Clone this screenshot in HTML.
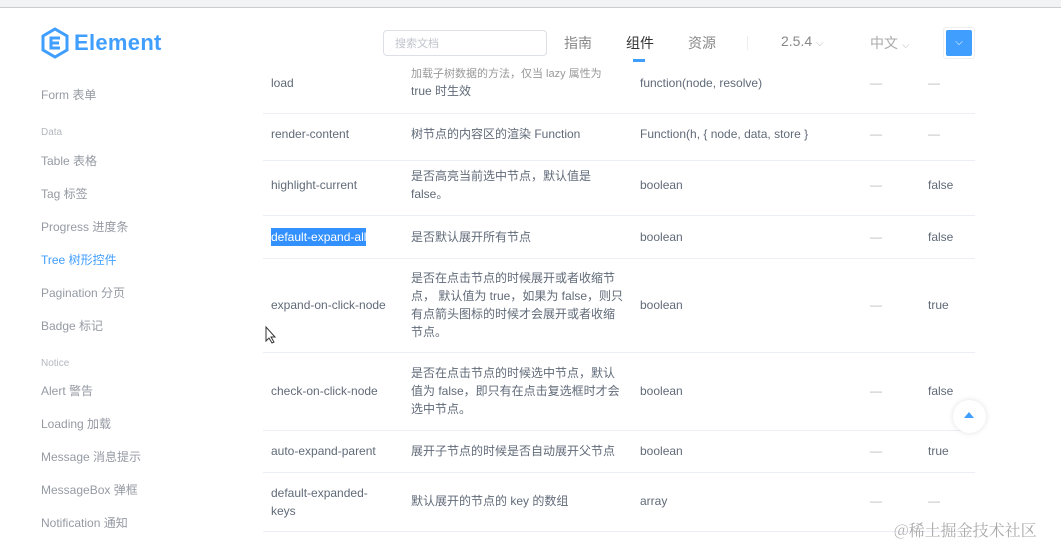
<!DOCTYPE html>
<html><head><meta charset="utf-8"><style>
*{margin:0;padding:0;box-sizing:border-box}
body{width:1061px;height:546px;overflow:hidden;background:#fff;font-family:"Liberation Sans","Noto Sans CJK SC",sans-serif;position:relative;color:#5e6d82}
.a{position:absolute;white-space:nowrap}
.top{position:absolute;left:0;top:0;width:1061px;height:8px;background:#f1f3f4;border-bottom:1px solid #ccc}
.side{font-size:12px;color:#959aa3}
.sm{font-size:10px;color:#b4b8bf}
.line{position:absolute;left:263px;width:712px;height:1px;background:#ebeef5}
.t{font-size:12px;color:#606a78;line-height:18px}
.d{color:#bbb}
.nav{font-size:14px;color:#888}
</style></head><body>
<div class="top"></div>
<svg class="a" style="left:40px;top:27px" width="30" height="32" viewBox="0 0 30 32"><path d="M15 2 L27 9 L27 23 L15 30 L3 23 L3 9 Z" fill="none" stroke="#409eff" stroke-width="3"/><path d="M20 11 L11 11 L11 21 L20 21 M11 16 L19 16" fill="none" stroke="#409eff" stroke-width="3"/></svg>
<div class="a" style="left:74px;top:30px;font-size:22px;font-weight:bold;color:#409eff;letter-spacing:0.3px">Element</div>
<div class="a" style="left:383px;top:30px;width:164px;height:26px;border:1px solid #dcdfe6;border-radius:4px"></div>
<div class="a" style="left:395px;top:35px;font-size:11px;color:#c0c4cc">搜索文档</div>
<div class="a nav" style="left:564px;top:33px">指南</div>
<div class="a nav" style="left:626px;top:33px;color:#333">组件</div>
<div class="a" style="left:633px;top:59px;width:12px;height:3px;background:#409eff"></div>
<div class="a nav" style="left:688px;top:33px">资源</div>
<div class="a" style="left:747px;top:36px;width:1px;height:14px;background:#eee"></div>
<div class="a nav" style="left:781px;top:33px">2.5.4 <span style="font-size:10px;color:#bbb">⌵</span></div>
<div class="a nav" style="left:870px;top:33px;color:#aaa">中文 <span style="font-size:10px;color:#bbb">⌵</span></div>
<div class="a" style="left:943px;top:27px;width:32px;height:32px;border:1px solid #eee;border-radius:3px"></div>
<div class="a" style="left:946px;top:30px;width:26px;height:26px;background:#409eff;border-radius:2px;color:#fff;font-size:10px;text-align:center;line-height:26px">⌵</div>

<div class="a side" style="left:41px;top:86px">Form 表单</div>
<div class="a sm" style="left:41px;top:127px">Data</div>
<div class="a side" style="left:41px;top:152px">Table 表格</div>
<div class="a side" style="left:41px;top:185px">Tag 标签</div>
<div class="a side" style="left:41px;top:218px">Progress 进度条</div>
<div class="a side" style="left:41px;top:251px;color:#409eff">Tree 树形控件</div>
<div class="a side" style="left:41px;top:284px">Pagination 分页</div>
<div class="a side" style="left:41px;top:317px">Badge 标记</div>
<div class="a sm" style="left:41px;top:358px">Notice</div>
<div class="a side" style="left:41px;top:382px">Alert 警告</div>
<div class="a side" style="left:41px;top:415px">Loading 加载</div>
<div class="a side" style="left:41px;top:448px">Message 消息提示</div>
<div class="a side" style="left:41px;top:481px">MessageBox 弹框</div>
<div class="a side" style="left:41px;top:514px">Notification 通知</div>

<div class="line" style="top:113px"></div>
<div class="line" style="top:160px"></div>
<div class="line" style="top:215px"></div>
<div class="line" style="top:258px"></div>
<div class="line" style="top:352px"></div>
<div class="line" style="top:430px"></div>
<div class="line" style="top:472px"></div>
<div class="line" style="top:531px"></div>

<div class="a t" style="left:411px;top:68px;font-size:11px;line-height:12px;color:#999">加载子树数据的方法，仅当 lazy 属性为</div>
<div class="a t" style="left:271px;top:74px">load</div>
<div class="a t" style="left:411px;top:82px">true 时生效</div>
<div class="a t" style="left:640px;top:74px">function(node, resolve)</div>
<div class="a t d" style="left:870px;top:74px">—</div><div class="a t d" style="left:928px;top:74px">—</div>

<div class="a t" style="left:271px;top:125px">render-content</div>
<div class="a t" style="left:411px;top:125px">树节点的内容区的渲染 Function</div>
<div class="a t" style="left:640px;top:125px">Function(h, { node, data, store }</div>
<div class="a t d" style="left:870px;top:125px">—</div><div class="a t d" style="left:928px;top:125px">—</div>

<div class="a t" style="left:271px;top:176px">highlight-current</div>
<div class="a t" style="left:411px;top:167px">是否高亮当前选中节点，默认值是<br>false。</div>
<div class="a t" style="left:640px;top:176px">boolean</div>
<div class="a t d" style="left:870px;top:176px">—</div><div class="a t" style="left:928px;top:176px">false</div>

<div class="a t" style="left:271px;top:228px;background:#3390ff;color:#fff">default-expand-all</div>
<div class="a t" style="left:411px;top:228px">是否默认展开所有节点</div>
<div class="a t" style="left:640px;top:228px">boolean</div>
<div class="a t d" style="left:870px;top:228px">—</div><div class="a t" style="left:928px;top:228px">false</div>

<div class="a t" style="left:271px;top:296px">expand-on-click-node</div>
<div class="a t" style="left:411px;top:269px;line-height:18px">是否在点击节点的时候展开或者收缩节<br>点， 默认值为 true，如果为 false，则只<br>有点箭头图标的时候才会展开或者收缩<br>节点。</div>
<div class="a t" style="left:640px;top:296px">boolean</div>
<div class="a t d" style="left:870px;top:296px">—</div><div class="a t" style="left:928px;top:296px">true</div>
<svg class="a" style="left:265px;top:326px" width="12" height="18" viewBox="0 0 12 18"><path d="M1 1 L1 15 L4 12 L7 17 L9 16 L6 11 L10 11 Z" fill="#fff" stroke="#333" stroke-width="1"/></svg>

<div class="a t" style="left:271px;top:382px">check-on-click-node</div>
<div class="a t" style="left:411px;top:364px">是否在点击节点的时候选中节点，默认<br>值为 false，即只有在点击复选框时才会<br>选中节点。</div>
<div class="a t" style="left:640px;top:382px">boolean</div>
<div class="a t d" style="left:870px;top:382px">—</div><div class="a t" style="left:928px;top:382px">false</div>

<div class="a t" style="left:271px;top:442px">auto-expand-parent</div>
<div class="a t" style="left:411px;top:442px">展开子节点的时候是否自动展开父节点</div>
<div class="a t" style="left:640px;top:442px">boolean</div>
<div class="a t d" style="left:870px;top:442px">—</div><div class="a t" style="left:928px;top:442px">true</div>

<div class="a t" style="left:271px;top:484px">default-expanded-<br>keys</div>
<div class="a t" style="left:411px;top:492px">默认展开的节点的 key 的数组</div>
<div class="a t" style="left:640px;top:492px">array</div>
<div class="a t d" style="left:870px;top:492px">—</div><div class="a t d" style="left:928px;top:492px">—</div>

<div class="a" style="left:953px;top:400px;width:33px;height:33px;border-radius:50%;background:#fff;box-shadow:0 0 6px rgba(0,0,0,.12)"></div>
<div class="a" style="left:964px;top:412px;width:0;height:0;border-left:5px solid transparent;border-right:5px solid transparent;border-bottom:6px solid #409eff"></div>
<div class="a" style="left:894px;top:518px;font-size:16px;color:#aaa;font-family:'Noto Serif CJK SC',serif">@稀土掘金技术社区</div>
</body></html>
